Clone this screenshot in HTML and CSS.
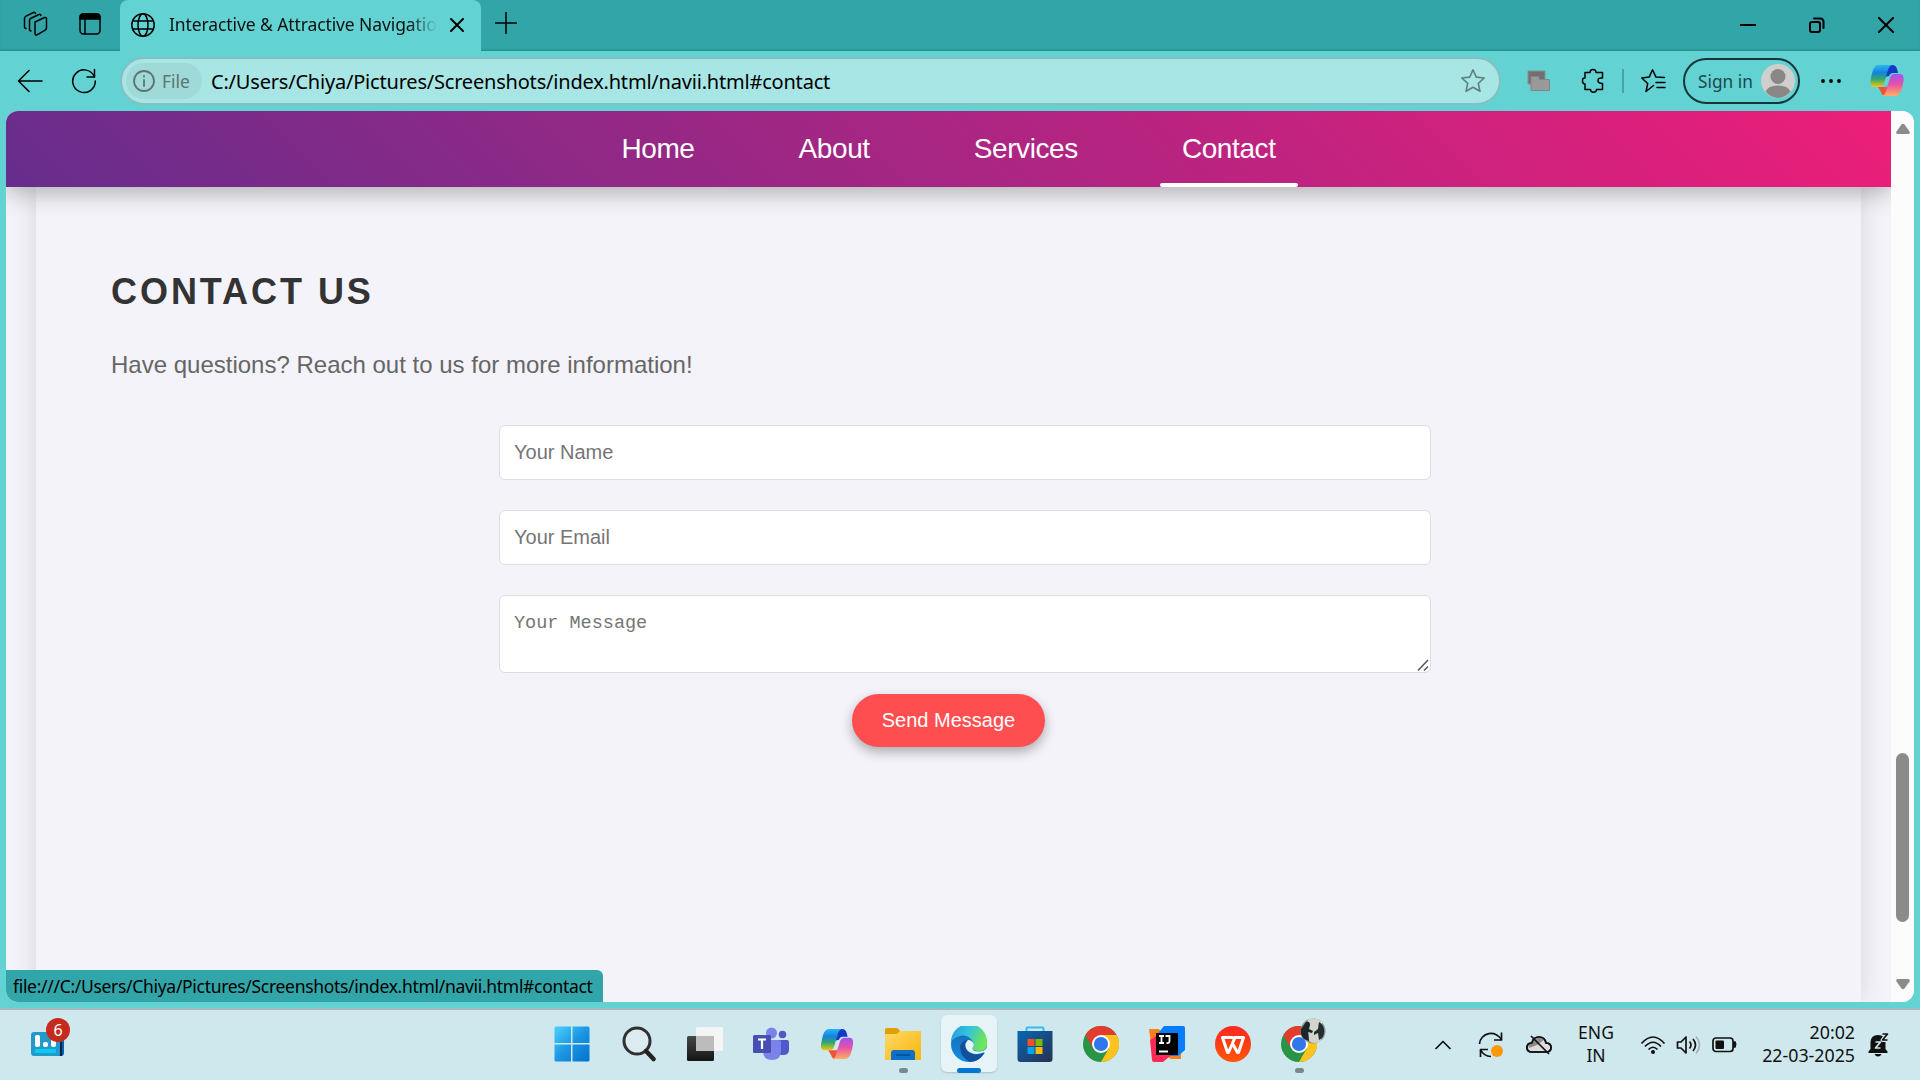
FILE: index.html
```html
<!DOCTYPE html>
<html lang="en">
<head>
<meta charset="utf-8">
<title>Interactive &amp; Attractive Navigation</title>
<link rel="stylesheet" href="styles.css">
</head>
<body>
<svg width="0" height="0" class="defs" aria-hidden="true">
  <defs>
    <linearGradient id="cpA" x1="0" y1="0" x2="0" y2="1"><stop offset="0" stop-color="#28b5f4"/><stop offset=".35" stop-color="#1583dc"/><stop offset=".65" stop-color="#36a968"/><stop offset="1" stop-color="#f5c810"/></linearGradient>
    <linearGradient id="cpB" x1="0" y1="0" x2="0" y2="1"><stop offset="0" stop-color="#9b55f0"/><stop offset=".45" stop-color="#e650a8"/><stop offset="1" stop-color="#ffae62"/></linearGradient>
    <linearGradient id="winG" x1="0" y1="0" x2="1" y2="1"><stop offset="0" stop-color="#4cd2fd"/><stop offset=".5" stop-color="#1c96e2"/><stop offset="1" stop-color="#0270d0"/></linearGradient>
    <linearGradient id="foldG" x1="0" y1="0" x2="1" y2="1"><stop offset="0" stop-color="#ffd967"/><stop offset="1" stop-color="#f8b50c"/></linearGradient>
    <linearGradient id="edgeA" x1="0" y1="0" x2="1" y2=".35"><stop offset="0" stop-color="#2594df"/><stop offset=".5" stop-color="#32c4dd"/><stop offset="1" stop-color="#6ce65a"/></linearGradient>
    <linearGradient id="edgeB" x1="0" y1="0" x2="0" y2="1"><stop offset="0" stop-color="#1765ae"/><stop offset="1" stop-color="#168ee2"/></linearGradient>
    <linearGradient id="storeG" x1="0" y1="0" x2="1" y2="1"><stop offset="0" stop-color="#0967b5"/><stop offset="1" stop-color="#27304f"/></linearGradient>
    <linearGradient id="darkG" x1="0" y1="0" x2="0" y2="1"><stop offset="0" stop-color="#484848"/><stop offset="1" stop-color="#141414"/></linearGradient>
    <linearGradient id="wpsG" x1="0" y1="0" x2="0" y2="1"><stop offset="0" stop-color="#fc2723"/><stop offset="1" stop-color="#ff5608"/></linearGradient>
    <symbol id="copilot" viewBox="0 0 34 32">
      <path d="M18 0h4q4 0 5 4l1 4h-5q-3 0-4 3l-4 1-2-2z" fill="#1439c4"/>
      <path d="M8 22h7q3 0 4-3l2 3-3 9h-2q-4 0-5-4z" fill="#f0533a"/>
      <path d="M9 0H22q-3 1-4 5l-4 13q-1 4-5 4H4Q0 22 .5 16Q1 11 3 5Q5 0 9 0z" fill="url(#cpA)"/>
      <path d="M25 9h5q4 0 3.600 6q-.6 6-2.600 11q-2 5-6 5H12q3-1 4-5l4-13q1-4 5-4z" fill="url(#cpB)"/>
    </symbol>
    <symbol id="chrome" viewBox="0 0 36 36">
      <circle cx="18" cy="18" r="18" fill="#2a9446"/>
      <path d="M2.400 9A18 18 0 0 1 33.600 9H18l-7.800 13.500z" fill="#e33b2e"/>
      <path d="M33.600 9A18 18 0 0 1 18 36l7.800-13.500L18 9z" fill="#fdc420"/>
      <circle cx="18" cy="18" r="9" fill="#fff"/><circle cx="18" cy="18" r="7.100" fill="#2f78ec"/>
    </symbol>
  </defs>
</svg>
<div class="screen">
  <header class="tabstrip">
    <div class="strip-tools">
      <svg width="26" height="26" viewBox="0 0 26 26" class="line"><path d="M12 11l9.500-4.500q2-.5 2 1.500v8.500q0 2-1.700 2.800L14 23.800q-2 .8-2-1.500z"/><path d="M8 20q-1.500 0-1.500-2V9.500q0-1.500 1.500-2.300L16 3.500q1.500-.5 2 1"/><path d="M3 17.500q-1.500 0-1.500-2V7.500Q1.500 6 3 5.200L10.500 1.500q1.500-.5 2 1"/></svg>
      <svg width="24" height="24" viewBox="0 0 24 24" class="line"><rect x="2" y="2" width="20" height="20" rx="3.500"/><path d="M2 7V5q0-3 3-3h14q3 0 3 3v2z" fill="#000"/><path d="M7 7v15"/></svg>
    </div>
    <div class="tab">
      <svg width="24" height="24" viewBox="0 0 24 24" class="line"><circle cx="12" cy="12" r="11.200"/><ellipse cx="12" cy="12" rx="5" ry="11.200"/><path d="M2 8h20M2 16h20"/></svg>
      <span class="tab-title">Interactive &amp; Attractive Navigation</span>
      <svg width="14" height="14" viewBox="0 0 14 14" class="line bold"><path d="M1 1l12 12M13 1L1 13"/></svg>
    </div>
    <svg class="plus line" width="22" height="22" viewBox="0 0 22 22"><path d="M11 0v22M0 11h22"/></svg>
    <div class="window-controls">
      <svg width="16" height="16" viewBox="0 0 16 16" class="line bold"><path d="M0 8h15.500"/></svg>
      <svg width="16" height="16" viewBox="0 0 16 16" class="line bold"><rect x="1" y="5" width="10" height="10" rx="2"/><path d="M5 1.500h6q3.500 0 3.500 3.500v6"/></svg>
      <svg width="16" height="16" viewBox="0 0 16 16" class="line bold"><path d="M.7.700l14.600 14.600M15.300.7L.7 15.300"/></svg>
    </div>
  </header>

  <div class="toolbar">
    <svg class="back line" width="26" height="24" viewBox="0 0 26 24"><path d="M25 12H1.500M12 1.500L1.500 12 12 22.500"/></svg>
    <svg class="reload line" width="26" height="26" viewBox="0 0 26 26"><path d="M23.500 9A11.300 11.300 0 1 0 24.300 13"/><path d="M23.500 1.500V9H16"/></svg>
    <div class="address">
      <div class="file-chip">
        <svg width="22" height="22" viewBox="0 0 22 22" class="line"><circle cx="11" cy="11" r="10"/><path d="M11 10v6M11 6v.5"/></svg>
        <span>File</span>
      </div>
      <span class="url">C:/Users/Chiya/Pictures/Screenshots/index.html/navii.html#contact</span>
      <svg class="star" width="26" height="26" viewBox="0 0 26 26"><path d="M13 1.800l3.300 7.300 7.900.9-5.900 5.300 1.700 8L13 19.300l-7 4 1.700-8L1.800 10l7.900-.9z"/></svg>
    </div>
    <svg class="stack" width="24" height="22" viewBox="0 0 24 22"><path d="M1 1h17v13H1z" fill="#707070" stroke="#8d8d8d"/><path d="M4 6.500h8v3h10.500v11H4z" fill="#999" stroke="#858585"/></svg>
    <svg class="puzzle line" width="24" height="26" viewBox="0 0 24 26"><path d="M4 4.500H9Q9 1.500 12 1.500T15 4.500H21.500V10Q17 9.500 17 12.500T21.500 15.500V21.500H15.500Q15.500 24.200 12.500 24.200T9.500 21.500H4V16Q1.500 16 1.500 12.700T4 10z"/></svg>
    <i class="divider"></i>
    <svg class="favs line" width="26" height="26" viewBox="0 0 26 26"><path d="M13.500 17.500L6 23.500l1.700-8L1.800 10l7.400-.9L12.500 1.800l3.500 7.300 8.500.4M16 14.500h9M17 19.500h8"/></svg>
    <div class="signin"><span>Sign in</span>
      <svg width="34" height="34" viewBox="0 0 34 34"><circle cx="17" cy="17" r="17" fill="#d0cfcd"/><circle cx="17" cy="12.500" r="7.500" fill="#8a8886"/><path d="M4.500 27.500Q7 21.500 17 21.500T29.500 27.500Q24 34 17 34T4.500 27.500z" fill="#8a8886"/></svg>
    </div>
    <svg class="dots" width="22" height="6" viewBox="0 0 22 6"><circle cx="3" cy="3" r="1.900"/><circle cx="11" cy="3" r="1.900"/><circle cx="19" cy="3" r="1.900"/></svg>
    <svg class="copilot-button" width="34" height="32"><use href="#copilot"/></svg>
  </div>

  <div class="viewport">
    <div class="page">
      <nav class="navbar">
        <a>Home</a><a>About</a><a>Services</a><a class="active">Contact</a>
      </nav>
      <section class="contact">
        <h2>Contact Us</h2>
        <p>Have questions? Reach out to us for more information!</p>
        <form>
          <input type="text" placeholder="Your Name">
          <input type="email" placeholder="Your Email">
          <div class="message"><span>Your Message</span>
            <svg class="grip" width="12" height="12" viewBox="0 0 12 12"><path d="M1 11.500L11 1M7 11.500l4-4"/></svg>
          </div>
          <button type="button">Send Message</button>
        </form>
      </section>
      <div class="status">file:///C:/Users/Chiya/Pictures/Screenshots/index.html/navii.html#contact</div>
    </div>
    <div class="scrollbar">
      <svg width="16" height="12" viewBox="0 0 16 12"><path d="M6.500 1.500Q8 0 9.500 1.500L14.500 8.500Q15.500 11 13 11H3Q.5 11 1.500 8.500z" fill="#8b8b8b"/></svg>
      <i class="thumb"></i>
      <svg width="16" height="12" viewBox="0 0 16 12"><path d="M6.500 10.500Q8 12 9.500 10.500L14.500 3.500Q15.500 1 13 1H3Q.5 1 1.500 3.500z" fill="#8b8b8b"/></svg>
    </div>
  </div>

  <footer class="taskbar">
    <div class="widgets">
      <svg width="36" height="40" viewBox="0 0 36 40"><path d="M20 15h10q3 0 3 3v18q0 3-3 3H20z" fill="#0d5fb5"/><rect x="0" y="15" width="30" height="24" rx="3" fill="#2499cc"/><path d="M29 25h2v14h-2z" fill="#06224a"/><rect x="4" y="18" width="5" height="12" rx="2" fill="#fff"/><rect x="12" y="25" width="5" height="5" rx="2" fill="#fff"/><rect x="20" y="22" width="5" height="8" rx="2" fill="#fff"/><rect x="4" y="32" width="21" height="4" rx="1" fill="#07cdf2"/></svg>
      <b class="badge">6</b>
    </div>
    <div class="apps">
      <div class="app"><svg width="36" height="36" viewBox="0 0 36 36"><path d="M2 .5H17V17H.500V2Q.5.500 2 .5zM18.500.5H34Q35.500.500 35.500 2V17H18.500zM.5 18.500H17V35.500H2Q.5 35.500.5 34zM18.500 18.500H35.500V34Q35.500 35.500 34 35.500H18.500z" fill="url(#winG)"/></svg></div>
      <div class="app"><svg class="shift" width="34" height="36" viewBox="0 0 34 36"><circle cx="15" cy="15" r="13" fill="#dcebf2" stroke="#303030" stroke-width="3"/><path d="M24 25l7.500 8" stroke="#222" stroke-width="4.500" stroke-linecap="round"/></svg></div>
      <div class="app"><svg width="36" height="34" viewBox="0 0 36 34"><rect x="0" y="9" width="27" height="25" rx="1.500" fill="url(#darkG)"/><rect x="9" y="0" width="27" height="24" rx="1.500" fill="#f5f5f5"/><path d="M9 9H27v15H9z" fill="#bcbcbc"/></svg></div>
      <div class="app"><svg width="36" height="34" viewBox="0 0 36 34"><circle cx="29.500" cy="7.500" r="3.800" fill="#5059c9"/><path d="M26 13h8q2 0 2 2v8q0 5-6 5h-4z" fill="#5059c9"/><circle cx="18.500" cy="6" r="5.500" fill="#7b83eb"/><path d="M10 13h16q2 0 2 2v9q0 9-9 9t-9-9z" fill="#7b83eb"/><rect y="8" width="18" height="18" rx="1.500" fill="#4750b2"/><path d="M5 12.500h8M9 12.500v9.500" stroke="#fff" stroke-width="2.200"/></svg></div>
      <div class="app"><svg width="34" height="31" viewBox="0 0 34 32"><use href="#copilot"/></svg></div>
      <div class="app"><svg width="36" height="34" viewBox="0 0 36 34"><path d="M1.500 1H11q2 0 3 1.500L15 4H36v3H0V2.500Q0 1 1.500 1z" fill="#dfa100"/><path d="M0 7h12l3-3H36v28q0 1-1 1H0z" fill="url(#foldG)"/><path d="M6 33v-7q0-3 3-3h18q3 0 3 3v7z" fill="#0e70c4"/><path d="M11 28h14" stroke="#074b91" stroke-width="1.500"/></svg><i class="dot"></i></div>
      <div class="app current"><svg width="36" height="36" viewBox="0 0 36 36"><circle cx="18" cy="18" r="18" fill="url(#edgeB)"/><path d="M0 16A18 18 0 0 1 36 16Q37 25 28 25Q21.500 25 21.500 22Q24 20 22.500 17Q19 9 11 9.500Q3 11 0 16z" fill="url(#edgeA)"/><path d="M17 14Q9 15 9 22Q10 32 19 35.900Q28 36 33.500 26.500Q22 31 16.500 25Q12 19 17 14z" fill="#12509b"/><path d="M17 14Q12 19 16.500 24.500Q23 30.500 33 26.200L33.800 27L36 28V22Q33 25.500 28 25.500Q21 25.500 21.500 22Q24 19 22 16.500Q20 13.500 17 14z" fill="#e6f3f7"/></svg><i class="dot"></i></div>
      <div class="app"><svg width="36" height="36" viewBox="0 0 36 36"><path d="M9.500 7V2.500q0-1 1-1h15q1 0 1 1V7" fill="none" stroke="#31bdf2" stroke-width="2"/><path d="M.5 5H35.500V33q0 3-3 3h-29q-3 0-3-3z" fill="url(#storeG)"/><path d="M10.500 13h7v7h-7z" fill="#f25022"/><path d="M18.500 13h7v7h-7z" fill="#7fba00"/><path d="M10.500 21h7v7h-7z" fill="#00a4ef"/><path d="M18.500 21h7v7h-7z" fill="#ffb900"/></svg></div>
      <div class="app"><svg width="36" height="36"><use href="#chrome"/></svg></div>
      <div class="app"><svg width="36" height="36" viewBox="0 0 36 36"><path d="M0 3H10L24 26H32V33H22L2 18z" fill="#fc801d"/><path d="M15 0H34Q36 0 36 2V24L29 30H10V6z" fill="#087cfa"/><path d="M1 14L10 8 26 26 14 36H5Q3 36 3 34z" fill="#fe2857"/><path d="M7 7H29V29H7z"/><path d="M10 25.500h9M10 10h5M12.500 10v7M10 17h5M16.500 10h4v5q0 2.500-3 2" fill="none" stroke="#fff" stroke-width="1.800"/></svg></div>
      <div class="app"><svg width="36" height="36" viewBox="0 0 36 36"><circle cx="18" cy="18" r="18" fill="url(#wpsG)"/><path d="M17.500 11.500H7.500L12.500 26.500H13.500L20 11.500H28.500L23.500 26.500H22.500L17.500 17.500" fill="none" stroke="#fff" stroke-width="3" stroke-linejoin="round" stroke-linecap="round"/></svg></div>
      <div class="app"><svg width="36" height="36"><use href="#chrome"/></svg>
        <svg class="profile" width="26" height="26" viewBox="0 0 26 26"><circle cx="13" cy="13" r="12.500" fill="#8e9490"/><path d="M8 1.500q8-3 14 3l-1 18q-7 5-12 0z" fill="#d3d4cb"/><path d="M6 4q4-1 4 3l-1 4 4 2-1 2-4-1 1 9-5-2Q0 17 1 11z" fill="#1d2728"/><path d="M19 4q4 2 5 7t-2 9l-3 2-1-7-4 2v-3l4-3z" fill="#252e2e"/></svg>
        <i class="dot"></i></div>
    </div>
    <div class="tray">
      <svg class="t-chev" width="18" height="12" viewBox="0 0 18 12"><path d="M1.500 10L9 2.500 16.500 10"/></svg>
      <svg class="t-sync" width="26" height="26" viewBox="0 0 26 26"><path d="M1.500 12A11.500 11 0 0 1 23.500 8M23.500.5V8H16M13 24.500A12 12 0 0 1 2.500 17.500M2.500 25V17.500H10"/><circle cx="19" cy="19" r="6" fill="#ff9807" stroke="none"/></svg>
      <svg class="t-cloud" width="26" height="22" viewBox="0 0 26 22"><path d="M6 18Q1 18 1 13.500T6 9Q7 3 13 3t7 6q5 0 5 4.500T20 18z" fill="#ddd"/><path d="M2 10l4-1q1-6 7-6 3 0 5 3l-7 5-8 3z" fill="#8c8c8c" stroke="none"/><path d="M6 18Q1 18 1 13.500T6 9Q7 3 13 3t7 6q5 0 5 4.500T20 18zM5 2l18 18"/></svg>
      <div class="lang"><span>ENG</span><span>IN</span></div>
      <svg class="t-wifi" width="26" height="20" viewBox="0 0 26 20"><path d="M1.500 8.500Q13-4.500 24.500 8.500M5 11.500Q13 3 21 11.500M8.500 14.500Q13 10 17.500 14.500"/><circle cx="13" cy="17" r="2" fill="#111" stroke="none"/></svg>
      <svg class="t-sound" width="26" height="20" viewBox="0 0 26 20"><path d="M1.500 7H5l5-5v16l-5-5H1.500zM13.500 6.500q3 3.500 0 7M17 4q5 6 0 12"/><path class="faint" d="M20 1.500q7 8.500 0 17"/></svg>
      <svg class="t-batt" width="26" height="18" viewBox="0 0 26 18"><rect x="1" y="2" width="20" height="13.500" rx="3"/><rect x="3.500" y="4.500" width="8.500" height="8.500" rx="1" fill="#111" stroke="none"/><path d="M22 6h1q1.500 2.500 0 5h-1z" fill="#111"/></svg>
      <div class="clock"><span>20:02</span><span>22-03-2025</span></div>
      <svg class="t-bell" width="22" height="26" viewBox="0 0 22 26"><path d="M2.500 17V10Q3 3 10 3t7.500 7v7l2 2.500v1.500H.5v-1.500zM6.500 22h7q-1 2.500-3.500 2.500T6.500 22z" fill="#111" stroke="none"/><path d="M7.500 10h5l-5 6h5" stroke="#d0e8ee" stroke-width="1.700"/><path d="M14.500 2h5l-5 6h5" stroke="#d0e8ee" stroke-width="4"/><path d="M14.500 2h5l-5 6h5" stroke="#111" stroke-width="1.600"/></svg>
    </div>
  </footer>
</div>
</body>
</html>
```
FILE: styles.css
```css
* { box-sizing: border-box; }
body { margin: 0; overflow: hidden; }
svg { display: block; flex: none; }
.defs { position: absolute; }

.screen {
  width: 1920px; height: 1080px;
  display: flex; flex-direction: column;
  background: #62d2d3;
  font-family: "Noto Sans", "Open Sans", sans-serif;
  color: #111;
  white-space: nowrap;
}
.line { fill: none; stroke: #000; stroke-width: 1.5; stroke-linejoin: round; stroke-linecap: round; }
.bold { stroke-width: 2; }

/* Tab strip */
.tabstrip { height: 51px; display: flex; align-items: flex-start; background: #32a5a8; box-shadow: inset 0 -2px 2px -1px #27898b; }
.strip-tools { width: 120px; height: 48px; padding-left: 23px; display: flex; align-items: center; gap: 29px; }
.tab { width: 361px; height: 51px; padding: 0 17px 2px 11px; display: flex; align-items: center; background: #62d2d3; border-radius: 8px 8px 0 0; }
.tab-title {
  width: 268px; margin: 0 14px 2px 14px; overflow: hidden; font-size: 17.500px; letter-spacing: -.1px;
  -webkit-mask-image: linear-gradient(90deg, #000 240px, transparent 268px);
  mask-image: linear-gradient(90deg, #000 240px, transparent 268px);
}
.plus { margin: 12px 0 0 14px; }
.window-controls { margin: 17px 26px 0 auto; display: flex; gap: 53px; }

/* Toolbar */
.toolbar { height: 60px; display: flex; align-items: center; }
.back { margin-left: 17px; }
.reload { margin-left: 28px; }
.address { width: 1381px; height: 48px; margin-left: 23px; padding: 0 14px 0 4px; display: flex; align-items: center; background: #a8e6e5; border: 2px solid #87bfc0; border-radius: 24px; }
.file-chip { width: 76px; height: 36px; padding-left: 7px; display: flex; align-items: center; gap: 7px; border-radius: 18px; background: #9fdad9; color: #5f7373; font-size: 17.500px; }
.file-chip .line { stroke: #5f7373; stroke-width: 1.800; }
.url { margin-left: 9px; color: #000; font-size: 20px; letter-spacing: -.2px; }
.star { margin-left: auto; margin-right: -1px; fill: none; stroke: #60807f; stroke-width: 1.600; stroke-linejoin: round; }
.stack { margin-left: 26px; }
.puzzle { margin-left: 30px; }
.divider { width: 2px; height: 24px; margin-left: 17px; background: #48a5a6; }
.favs { margin-left: 16px; }
.signin { width: 117px; height: 46px; margin-left: 17px; padding: 0 3px 0 13px; display: flex; align-items: center; justify-content: space-between; border: 2px solid #163638; border-radius: 23px; color: #1e4849; font-size: 17.300px; }
.dots { margin-left: 20px; }
.copilot-button { margin-left: 28px; }

/* Browser content */
.viewport { width: 1908px; height: 891px; margin-left: 6px; display: flex; border-radius: 12px; overflow: hidden; background: #f4f3f9; }
.page { position: relative; width: 1885px; overflow: hidden; font-family: "Liberation Sans", Arial, sans-serif; }
.navbar { position: relative; z-index: 1; height: 76px; display: flex; justify-content: center; gap: 60px; background: linear-gradient(45deg, #662d8c, #ed1e79); box-shadow: 0 5px 25px rgba(0, 0, 0, .3); }
.navbar a { position: relative; padding: 22px 22px 0; color: #fff; font-size: 28px; line-height: 32px; letter-spacing: -.4px; }
.navbar .active::after { content: ""; position: absolute; left: 0; right: 0; bottom: 0; height: 4px; border-radius: 2px; background: #fff; }
.contact { height: 815px; margin: 0 30px; padding: 82px 75px 0; background: #f4f3f9; box-shadow: 0 0 25px rgba(0, 0, 0, .12); }
.contact h2 { margin: 0; color: #333; font-size: 36px; line-height: 46px; letter-spacing: 2.950px; text-transform: uppercase; }
.contact p { margin: 31px 0 0; color: #666; font-size: 24px; line-height: 38px; }
.contact form { width: 932px; margin: 41px 0 0 388px; display: flex; flex-direction: column; }
.contact input, .message { border: 1px solid #ddd; border-radius: 6px; background: #fff; color: #757575; padding: 0 14px; }
.contact input { height: 55px; margin-bottom: 30px; font: 20px "Liberation Sans", Arial, sans-serif; outline: 0; }
.contact input::placeholder { color: #757575; }
.message { position: relative; height: 78px; padding-top: 16px; font: 18.500px/24px "Liberation Mono", monospace; }
.grip { position: absolute; right: 1px; bottom: 1px; fill: none; stroke: #555; stroke-width: 1.500; }
.contact button { width: 193px; height: 53px; margin: 21px 0 0 353px; padding: 0; border: 0; border-radius: 27px; background: #ff4e50; color: #fff; font: 20px "Liberation Sans", Arial, sans-serif; box-shadow: 0 5px 12px rgba(0, 0, 0, .3); }
.status { position: absolute; left: -1px; bottom: 0; width: 598px; height: 32px; padding-left: 8px; background: #32a5a8; border-radius: 0 6px 0 12px; color: #000; font: 17.500px/33px "Noto Sans", sans-serif; letter-spacing: -.31px; }
.scrollbar { width: 23px; height: 891px; padding: 12px 0; display: flex; flex-direction: column; align-items: center; background: #fcfcfc; }
.thumb { width: 13px; height: 169px; margin: 618px 0 56px; border-radius: 7px; background: #8b8b8b; }

/* Taskbar */
.taskbar { height: 72px; margin-top: auto; display: flex; border-top: 2px solid #a7b9bf; background: #cfe8ee; }
.widgets { position: relative; width: 539px; padding: 7px 0 0 31px; }
.badge { position: absolute; left: 46px; top: 8px; width: 24px; height: 24px; border-radius: 12px; background: #c42b1c; color: #fff; font-weight: 400; font-size: 16px; line-height: 24px; text-align: center; }
.apps { width: 793px; padding-left: 1px; display: flex; }
.app { position: relative; width: 66px; height: 70px; padding-bottom: 2px; display: flex; align-items: center; justify-content: center; }
.app .shift { margin-left: 0; }
.app:first-child { right: 1px; }
.app .dot { position: absolute; left: 29px; bottom: 7px; width: 9px; height: 5px; border-radius: 3px; background: #788a8e; }
.current::before { content: ""; position: absolute; left: 5px; top: 5px; width: 56px; height: 57px; border-radius: 6px; background: #e6f3f7; box-shadow: 0 1px 2px #a9c2c8; }
.current svg { position: relative; }
.app.current .dot { left: 21px; width: 24px; background: #0078d4; }
.profile { position: absolute; left: 34px; top: 8px; }

.tray { flex: 1; display: flex; align-items: center; padding-left: 102px; }
.tray svg { position: relative; fill: none; stroke: #111; stroke-width: 1.700; stroke-linejoin: round; }
.tray .faint { stroke: #a3b5bb; }
.t-sync { margin-left: 26px; }
.t-cloud { margin-left: 22px; }
.lang, .clock { display: flex; flex-direction: column; padding-bottom: 3px; font-size: 17.500px; line-height: 23px; }
.lang { width: 50px; margin-left: 19px; align-items: center; }
.t-wifi { margin-left: 19px; }
.t-sound { margin-left: 10px; }
.t-batt { margin-left: 10px; }
.clock { width: 102px; margin-left: 15px; align-items: flex-end; font-size: 17.800px; }
.t-bell { margin-left: 13px; }
```
